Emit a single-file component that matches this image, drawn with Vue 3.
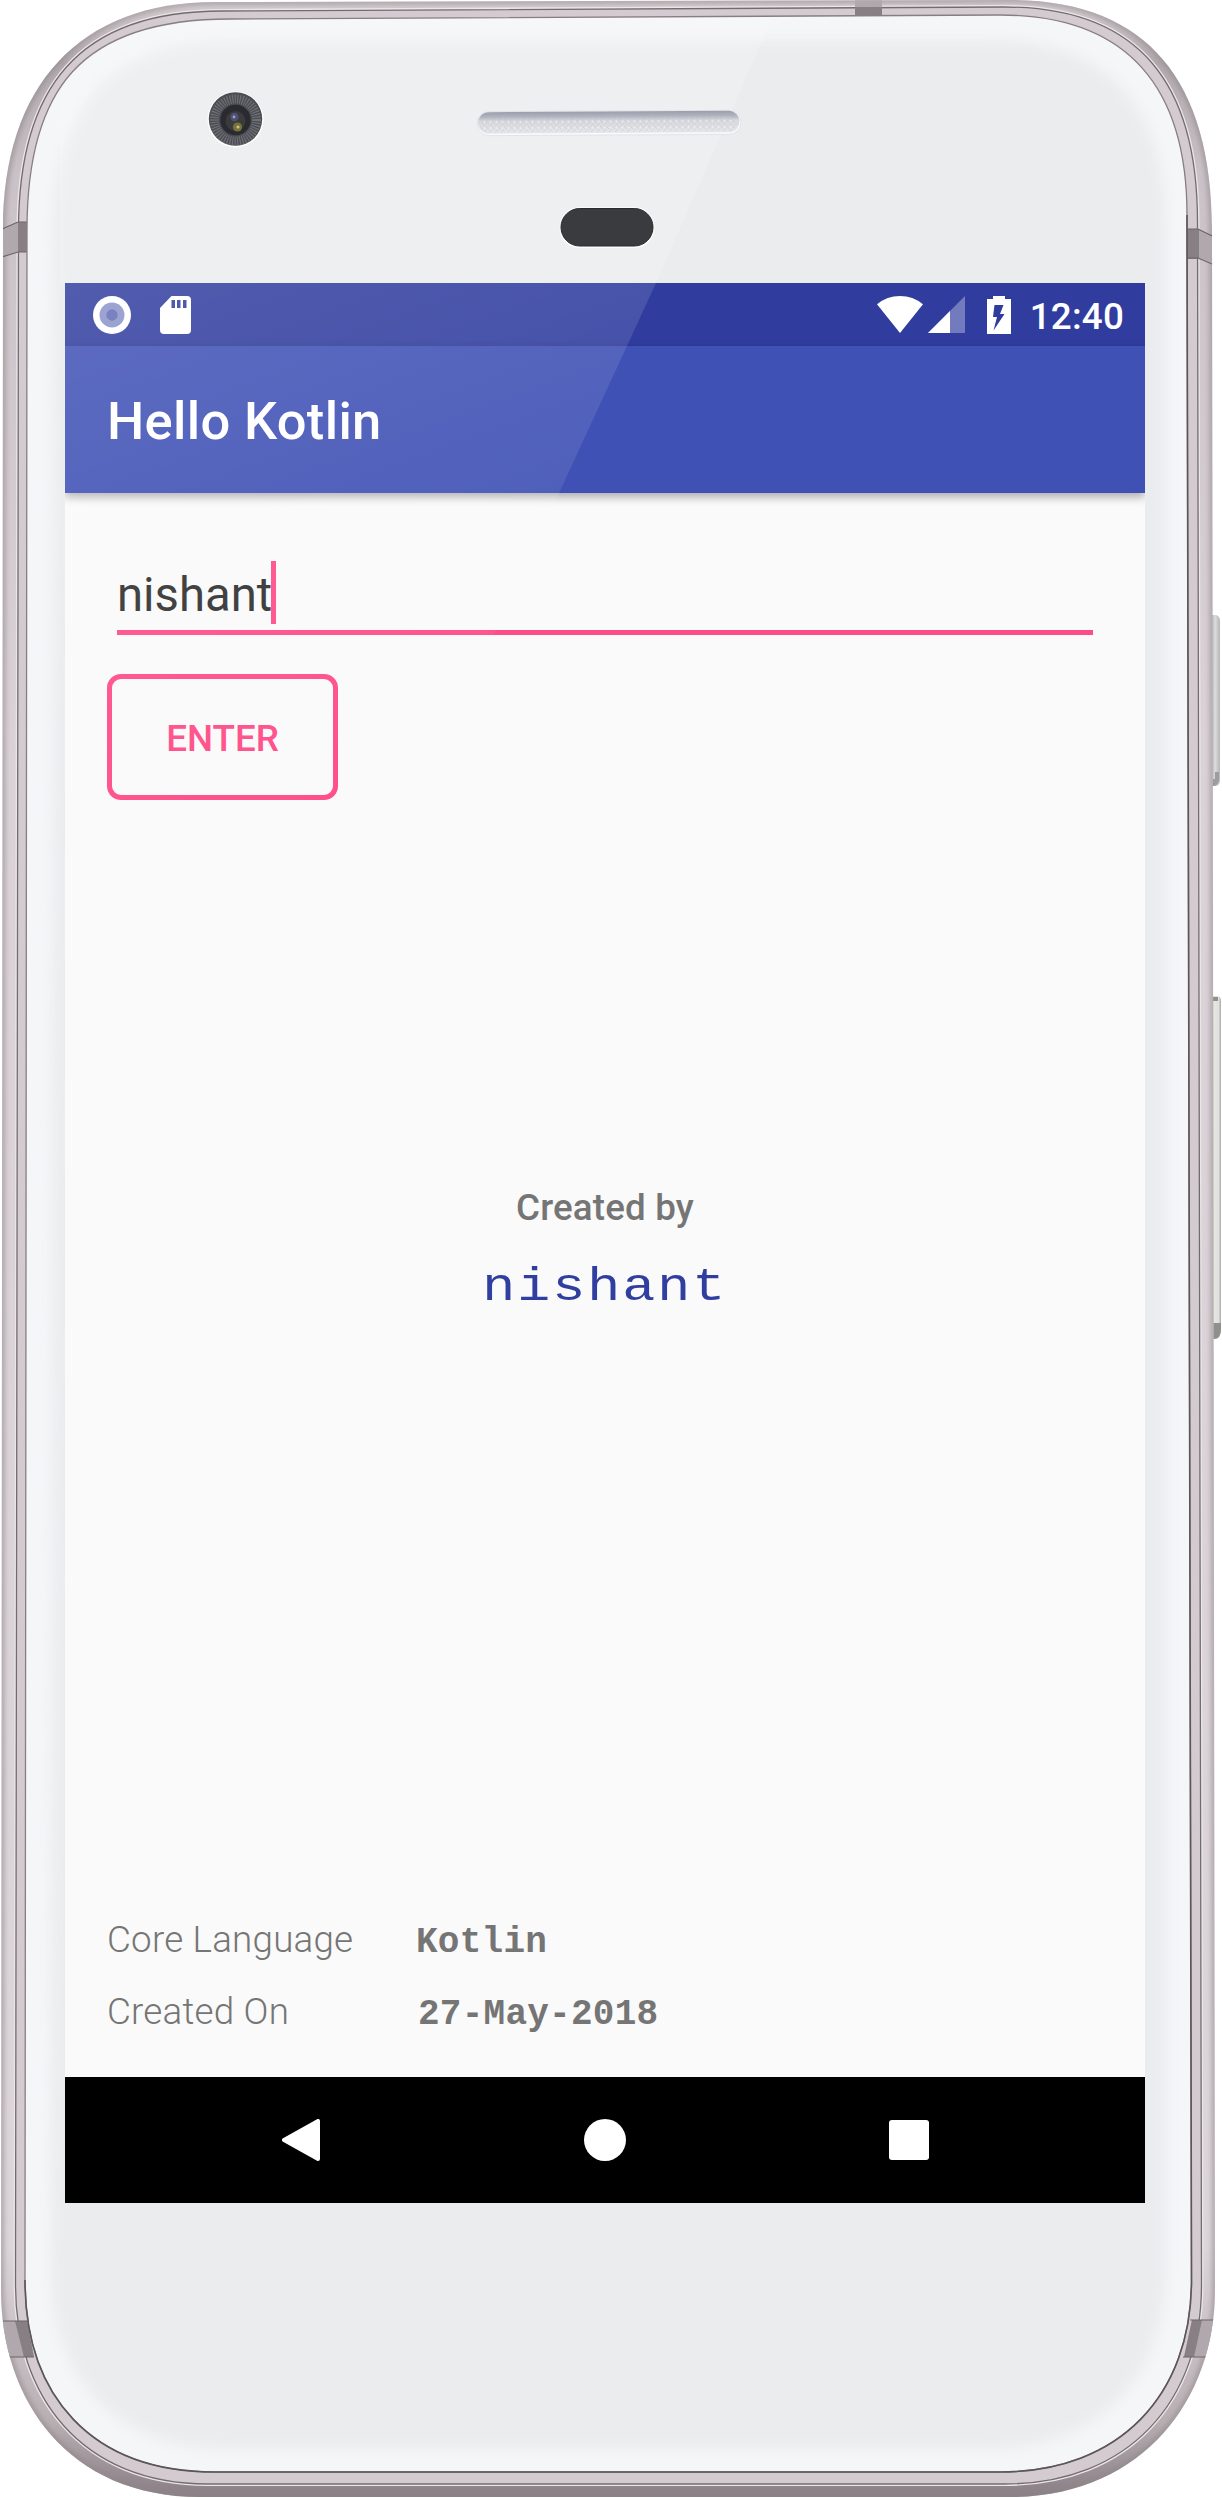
<script setup>
import { ref } from 'vue'

const name = ref('nishant')
const details = [
  { label: 'Core Language', value: 'Kotlin' },
  { label: 'Created On', value: '27-May-2018', shifted: true },
]

const body =
  'M3 230C3 85 80 2 215 2L1010 0C1145 0 1212 78 1212 230L1215 2290C1215 2400 1142 2497 1010 2497H200C68 2497 1 2400 1 2290Z'
const seam =
  'M18.5 230C18.5 88 78 11 222 11L1004 7C1140 7 1197.5 84 1197.5 222L1201.5 2285C1201.5 2400 1130 2484 1004 2484H208C80 2484 15.5 2395 15.5 2285Z'
const glass =
  'M27 230C27 90 80 19 230 19L1000 15C1130 15 1187 90 1187 215L1191.5 2280C1191.5 2395 1120 2472 1000 2472H215C90 2472 25 2395 25 2280Z'
</script>

<template>
  <main class="device">
    <svg class="frame" viewBox="0 0 1222 2498" aria-hidden="true">
      <defs>
        <linearGradient id="metal" x1="0" y1="0" x2="0" y2="1">
          <stop offset="0" stop-color="#d8d1d4" />
          <stop offset=".025" stop-color="#b0a8ac" />
          <stop offset=".07" stop-color="#cac2c6" />
          <stop offset=".3" stop-color="#dad2d6" />
          <stop offset=".9" stop-color="#dcd5d9" />
          <stop offset=".97" stop-color="#b8afb3" />
          <stop offset="1" stop-color="#887e83" />
        </linearGradient>
        <linearGradient id="speaker" x1="0" y1="0" x2="0" y2="1">
          <stop offset="0" stop-color="#9a9eab" />
          <stop offset=".25" stop-color="#b4b7c2" />
          <stop offset=".42" stop-color="#d5d7dc" />
          <stop offset="1" stop-color="#e6e7ea" />
        </linearGradient>
        <linearGradient id="keyTop" x1="0" x2="1">
          <stop offset="0" stop-color="#a9aaa8" />
          <stop offset=".45" stop-color="#dcdedd" />
          <stop offset="1" stop-color="#b4b6b8" />
        </linearGradient>
        <linearGradient id="keyLow" x1="0" x2="1">
          <stop offset="0" stop-color="#a8a8a4" />
          <stop offset=".3" stop-color="#e4e6e2" />
          <stop offset=".75" stop-color="#e0e2de" />
          <stop offset="1" stop-color="#aaaba8" />
        </linearGradient>
        <pattern id="mesh" width="6" height="6" patternUnits="userSpaceOnUse">
          <path d="M0 0l3 3M3 6l3-3" stroke="#c6c9ce" stroke-width="1" />
          <circle cx="4.5" cy="1.5" r="1" fill="#f5f5f6" />
        </pattern>
        <filter id="soft" x="-5%" y="-5%" width="110%" height="110%">
          <feGaussianBlur stdDeviation="7" />
        </filter>
        <filter id="edge" x="-5%" y="-5%" width="110%" height="110%">
          <feGaussianBlur stdDeviation="2.5" />
        </filter>
        <clipPath id="bodyClip"><path :d="body" /></clipPath>
        <clipPath id="glassClip"><path :d="glass" /></clipPath>
      </defs>

      <path d="M1211 615h5q4 1 4 6v158q0 7-4 7h-5z" fill="url(#keyTop)" />
      <path d="M1215 772h4v7q0 5-4 7h-3v-7h3z" fill="#9b9da0" />
      <path d="M1211 996h7q3 1 3 5v327q0 11-7 11h-3z" fill="url(#keyLow)" />
      <path d="M1211 997h7v4h-7zM1211 1323h10v6q0 10-7 10h-3z" fill="#8f908b" />

      <path :d="body" fill="url(#metal)" />
      <g clip-path="url(#bodyClip)">
        <path :d="body" fill="none" stroke="#8f868b" stroke-opacity=".6" stroke-width="6" filter="url(#edge)" />
      </g>
      <path :d="seam" fill="#d3cbcf" stroke="#ebe5e8" stroke-width="4" />
      <path :d="seam" fill="#d3cbcf" stroke="#746b70" stroke-width="1.3" />

      <g clip-path="url(#bodyClip)">
        <g fill="#b0a8ac">
          <path d="M0 229l18-7h10v30H18l-18 5zM1187 229h11l16 7v28l-16-6h-11zM0 2321h27l7 36H0zM1184 2357l8-37h30v37zM855 0h27v15h-27z" />
        </g>
        <g fill="#887f84">
          <path d="M18 222h10v30H18zM1187 229h12v30h-12zM15 2321h12l7 36H24zM1184 2357l8-37h10l-8 37zM855 7h27v9h-27z" />
        </g>
        <path
          d="M2 229l16-7h9M2 257l16-5h9M1188 229h10l14 7M1188 258h10l14 6M3 2321h24M8 2357h26M1190 2320h24M1183 2357h24"
          fill="none" stroke="#6e656a" stroke-width="1.2"
        />
      </g>

      <path :d="glass" fill="#f5f6f8" />
      <g clip-path="url(#glassClip)">
        <path
          d="M54 235C54 107 107 40 235 40H990C1108 40 1166 107 1166 225V2270C1166 2373 1103 2449 990 2449H225C112 2449 51 2373 51 2270Z"
          fill="#ebecee" filter="url(#soft)"
        />
        <path d="M780 0H150L60 90V283H656Z" fill="#fff" opacity=".18" />
      </g>
      <path :d="glass" fill="none" stroke="#877e83" stroke-width="1.3" />
      <path d="M1187 215L1191.5 2280C1191.5 2395 1120 2472 1000 2472H215C90 2472 25 2395 25 2280" fill="none" stroke="#5c5559" stroke-width="1.6" />

      <circle cx="235.5" cy="119.5" r="28" fill="#fff" />
      <circle cx="235.5" cy="119" r="26.7" fill="#4b4c51" />
      <circle cx="235.5" cy="120" r="21" fill="none" stroke="#6e6f75" stroke-width="9" stroke-dasharray="1.2 1.3" />
      <circle cx="235.5" cy="120" r="15.2" fill="#2a2b30" />
      <circle cx="235.5" cy="121" r="10" fill="#3c3b3c" />
      <circle cx="234.5" cy="117" r="4.2" fill="#4f5174" />
      <circle cx="234" cy="117" r="1.4" fill="#9fa0c0" />
      <circle cx="237.5" cy="127" r="4.6" fill="#77723c" />
      <circle cx="238" cy="127" r="1.6" fill="#c8c07a" />

      <g transform="rotate(-.3 609 122)">
        <rect x="477" y="111" width="264" height="24" rx="12" fill="#f9fafb" stroke="#dddfe2" stroke-width=".8" />
        <rect x="478" y="111.500" width="261.500" height="21.500" rx="10.700" fill="url(#speaker)" />
        <rect x="480" y="117" width="257" height="15" rx="7.500" fill="url(#mesh)" opacity=".7" />
      </g>
      <rect x="559.500" y="207" width="95" height="41" rx="20" fill="#fbfbfb" />
      <rect x="561" y="208.500" width="92" height="37.500" rx="18.700" fill="#3a3b3e" stroke="#2b2c30" stroke-width="1" />
    </svg>

    <section class="screen">
      <header class="status-bar">
        <svg class="dot-icon" width="38" height="38" viewBox="0 0 38 38">
          <circle cx="19" cy="19" r="19" fill="#fff" />
          <circle cx="19" cy="19" r="12.500" fill="#8a93c9" />
          <circle cx="19" cy="19" r="5.700" fill="#626db7" />
        </svg>
        <svg class="sd-icon" width="31" height="38" viewBox="0 0 31 38">
          <path fill="#fff" fill-rule="evenodd" d="M11.500 0H27q4 0 4 4v30q0 4-4 4H4q-4 0-4-4V12zM11.500 4v8h3.500V4zM17 4v8h3.500V4zM23 4v8h3.500V4z" />
        </svg>
        <span class="spacer"></span>
        <svg width="46" height="37" viewBox="0 0 46 37">
          <path d="M0 8.300Q10 0 23 0t23 8.300L23 37z" fill="#fff" />
        </svg>
        <svg class="signal" width="37" height="37" viewBox="0 0 37 37">
          <path d="M37 0v37H0z" fill="#fff" opacity=".32" />
          <path d="M22 15v22H0z" fill="#fff" />
        </svg>
        <svg class="battery" width="24" height="38" viewBox="0 0 24 38">
          <path fill="#fff" fill-rule="evenodd" d="M6 0h12v3h6v35H0V3h6zM7.500 9L6 21h4L6.500 34.500 17.500 18H13L16.500 9z" />
        </svg>
        <time>12:40</time>
      </header>
      <div class="app-bar"><h1>Hello Kotlin</h1></div>

      <div class="content">
        <div class="field"><span>{{ name }}</span><i class="caret"></i></div>
        <button class="enter" type="button">ENTER</button>
        <div class="author">
          <p class="caption">Created by</p>
          <p class="name">{{ name }}</p>
        </div>
        <dl class="details">
          <div v-for="item in details" :key="item.label" class="row">
            <dt>{{ item.label }}</dt>
            <dd :class="{ shifted: item.shifted }">{{ item.value }}</dd>
          </div>
        </dl>
      </div>

      <nav class="nav-bar">
        <svg width="38" height="42" viewBox="0 0 38 42">
          <path d="M36 2v38L2 21z" fill="#fff" stroke="#fff" stroke-width="4" stroke-linejoin="round" />
        </svg>
        <svg width="42" height="42" viewBox="0 0 42 42"><circle cx="21" cy="21" r="21" fill="#fff" /></svg>
        <svg width="40" height="40" viewBox="0 0 40 40"><rect width="40" height="40" rx="3" fill="#fff" /></svg>
      </nav>
      <div class="sheen"></div>
    </section>
  </main>
</template>

<style>
body {
  background: #fff;
}
</style>

<style scoped>
.device {
  position: relative;
  box-sizing: border-box;
  width: 1222px;
  height: 2498px;
  padding: 283px 77px 295px 65px;
  overflow: hidden;
  font-family: Roboto, "Noto Sans", sans-serif;
}
.frame {
  position: absolute;
  inset: 0;
  width: 1222px;
  height: 2498px;
}
.screen {
  position: relative;
  display: flex;
  flex-direction: column;
  width: 1080px;
  height: 1920px;
  background: #fafafa;
  overflow: hidden;
}
.status-bar {
  display: flex;
  align-items: center;
  height: 63px;
  box-sizing: border-box;
  padding: 0 21px 0 28px;
  background: #303d9f;
  color: #fff;
}
.sd-icon {
  margin-left: 29px;
}
.spacer {
  flex: 1;
}
.signal {
  margin-left: 5px;
}
.battery {
  margin: 0 19px 0 22px;
}
time {
  padding-top: 4px;
  font-size: 36.75px;
  font-weight: 500;
  line-height: 44px;
  letter-spacing: 0.2px;
}
.app-bar {
  position: relative;
  z-index: 1;
  display: flex;
  align-items: center;
  height: 147px;
  box-sizing: border-box;
  padding: 3px 42px 0;
  background: #3f51b5;
  box-shadow: 0 4px 9px rgba(0, 0, 0, 0.32);
  color: #fff;
}
h1 {
  margin: 0;
  font-size: 52.5px;
  font-weight: 500;
  line-height: 62px;
  letter-spacing: 0.33px;
}
.content {
  display: flex;
  flex: 1;
  flex-direction: column;
  align-items: flex-start;
  padding: 68px 42px 43px;
}
.field {
  display: flex;
  width: 976px;
  height: 69px;
  margin-left: 10px;
  border-bottom: 5px solid #ff4b87;
  color: #2f2f2f;
  font-size: 47.25px;
  line-height: 68px;
}
.caret {
  width: 5px;
  height: 63px;
  margin-left: -1px;
  background: #ff4b87;
}
.enter {
  box-sizing: border-box;
  width: 231px;
  height: 126px;
  margin-top: 39px;
  padding: 3px 0 0;
  border: 5px solid #ff4b87;
  border-radius: 14px;
  background: transparent;
  color: #ff4b87;
  font: 500 36.75px/44px Roboto, sans-serif;
}
.author {
  align-self: center;
  margin-top: 386px;
  text-align: center;
}
.caption {
  margin: 0;
  color: #757575;
  font-size: 36.75px;
  font-weight: 500;
  line-height: 44px;
  letter-spacing: 0.15px;
}
.name {
  margin: 28px 0 0;
  color: #303f9f;
  font-family: "Liberation Mono", monospace;
  font-size: 47px;
  line-height: 60px;
  letter-spacing: 1.7px;
  transform: scaleX(1.17);
}
.details {
  display: flex;
  flex-direction: column;
  gap: 28px;
  margin: auto 0 0;
}
.row {
  display: flex;
  align-items: baseline;
  height: 44px;
  color: #757575;
  line-height: 44px;
}
dt {
  width: 309px;
  font-size: 36.75px;
  font-weight: 300;
  letter-spacing: 0.22px;
}
dd {
  margin: 0;
  font-family: "Liberation Mono", monospace;
  font-size: 36px;
  font-weight: 700;
  letter-spacing: 0.25px;
}
dd.shifted {
  margin-left: 2px;
}
.nav-bar {
  display: flex;
  align-items: center;
  justify-content: space-between;
  box-sizing: border-box;
  height: 126px;
  padding: 0 216px 0 217px;
  background: #000;
}
.sheen {
  position: absolute;
  z-index: 2;
  inset: 0 auto auto 0;
  width: 591px;
  height: 1280px;
  clip-path: polygon(0 0, 100% 0, 0 100%);
  background: linear-gradient(160deg, rgba(255, 255, 255, 0.16), rgba(255, 255, 255, 0.08) 28%, rgba(255, 255, 255, 0) 48%);
  pointer-events: none;
}
</style>
